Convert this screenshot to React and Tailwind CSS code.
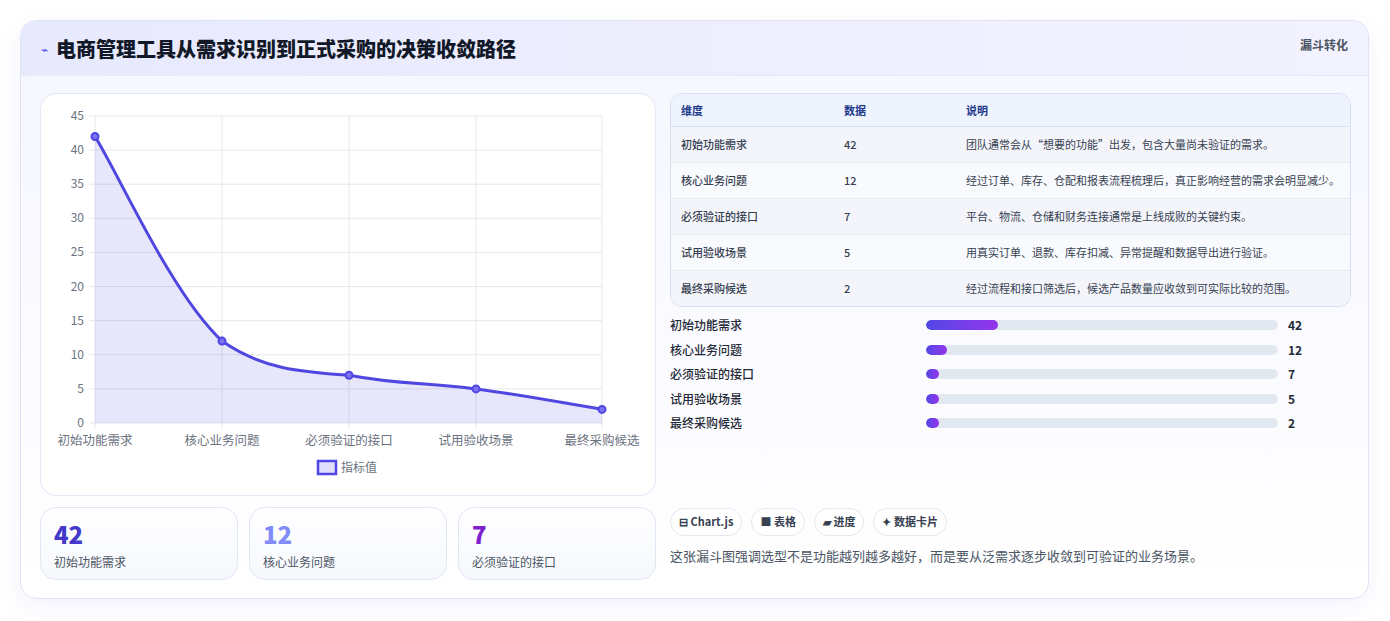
export default function App() {
  const rows = [
    ["初始功能需求", "42", "团队通常会从“想要的功能”出发，包含大量尚未验证的需求。"],
    ["核心业务问题", "12", "经过订单、库存、仓配和报表流程梳理后，真正影响经营的需求会明显减少。"],
    ["必须验证的接口", "7", "平台、物流、仓储和财务连接通常是上线成败的关键约束。"],
    ["试用验收场景", "5", "用真实订单、退款、库存扣减、异常提醒和数据导出进行验证。"],
    ["最终采购候选", "2", "经过流程和接口筛选后，候选产品数量应收敛到可实际比较的范围。"],
  ];
  const pts = [[54, 42.5], [181, 247.1], [308, 281.2], [435, 294.9], [561, 315.4]];
  const line = "M54,42.5 C79.4,83.4 130.2,199.4 181,247.1 C221,275 260,278 308,281.2 C358.8,290.8 384.2,288.1 435,294.9 C485.8,301.7 535.8,311.3 561,315.4";
  const yl = [45, 40, 35, 30, 25, 20, 15, 10, 5, 0];
  const xs = [54, 181, 308, 435, 561];
  const font = { fontFamily: '"Noto Sans CJK SC", "Noto Sans", sans-serif' };
  return (
    <div className="w-[1390px] h-[621px] bg-white pt-5 pl-5" style={font}>
      <div className="w-[1349px] h-[579px] rounded-2xl border border-[#dfe3f3] bg-gradient-to-b from-[#f5f6ff] to-white shadow-[0_8px_24px_rgba(99,102,241,0.08)] overflow-hidden">
        <div className="h-[55px] flex items-start justify-between bg-gradient-to-r from-[#e7e9fd] to-[#f3f2ff] px-5 border-b border-[#e8eaf8]">
          <div className="flex items-center gap-2 pt-[14px]">
            <span className="text-[12px] text-[#4f46e5]">⌁</span>
            <span className="text-[20px] font-extrabold text-[#111827] leading-[28px]">电商管理工具从需求识别到正式采购的决策收敛路径</span>
          </div>
          <span className="text-[12px] font-bold text-[#4b5563] pt-[15px]">漏斗转化</span>
        </div>
        <div className="flex gap-[14px] pl-[19px] pt-[17px]">
          <div className="w-[616px] flex flex-col gap-[11px]">
            <div className="h-[403px] rounded-2xl border border-[#e3e7f3] bg-white">
              <svg width="615" height="401" className="text-[12px]">
                {yl.map((v, i) => {
                  const y = 22 + i * (307 / 9);
                  return (
                    <g key={v}>
                      <line x1="48" x2="561" y1={y} y2={y} stroke="#e5e7eb" />
                      <text x="43" y={y + 4} textAnchor="end" fill="#6b7280" fontSize="12">{v}</text>
                    </g>
                  );
                })}
                {xs.map((x, i) => (
                  <g key={x}>
                    <line x1={x} x2={x} y1="22" y2="335" stroke="#e5e7eb" />
                    <text x={x} y="351" textAnchor="middle" fill="#6b7280" fontSize="12.5">{rows[i][0]}</text>
                  </g>
                ))}
                <path d={line + " L561,329 L54,329 Z"} fill="rgba(99,88,230,0.15)" />
                <path d={line} fill="none" stroke="#5047e0" strokeWidth="3" />
                {pts.map(([x, y]) => (
                  <circle key={x} cx={x} cy={y} r="3.5" fill="#7c72f0" stroke="#4f46e5" strokeWidth="2" />
                ))}
                <rect x="277" y="367" width="18" height="13" fill="#e0defc" stroke="#4f46e5" strokeWidth="2.5" />
                <text x="300" y="378" fill="#6b7280" fontSize="12">指标值</text>
              </svg>
            </div>
            <div className="grid grid-cols-3 gap-[11px]">
              {[["42", "text-[#4338ca]"], ["12", "text-[#818cf8]"], ["7", "text-[#7e22ce]"]].map(([v, c], i) => (
                <div key={v} className="h-[73px] rounded-2xl border border-[#dfe6f3] bg-gradient-to-b from-white to-[#f6f8fd] px-[13px] pt-[9px]">
                  <div className={`text-[24px] font-extrabold leading-[34px] ${c}`}>{v}</div>
                  <div className="text-[12px] text-[#4b5563] mt-[2px]">{rows[i][0]}</div>
                </div>
              ))}
            </div>
          </div>
          <div className="w-[681px] flex flex-col">
            <div className="rounded-xl border border-[#d6def0] overflow-hidden text-[11px]">
              <div className="flex h-[33px] items-center bg-[#eef3fd] border-b border-[#dbe2f0] font-bold text-[#1e3a8a]">
                <div className="w-[173px] pl-[10px]">维度</div>
                <div className="w-[122px]">数据</div>
                <div className="flex-1">说明</div>
              </div>
              {rows.map((r, i) => (
                <div key={r[0]} className={`flex py-[9px] ${i < 4 ? "border-b border-[#e5e9f2]" : ""} ${i % 2 ? "bg-[#f8fafd]" : "bg-[#f3f5fb]"} text-[#374151] leading-[17px]`}>
                  <div className="w-[173px] pl-[10px] font-medium">{r[0]}</div>
                  <div className="w-[122px] font-medium">{r[1]}</div>
                  <div className="flex-1 pr-[10px]">{r[2]}</div>
                </div>
              ))}
            </div>
            <div className="mt-[9px] flex flex-col gap-[6px]">
              {rows.map((r) => (
                <div key={r[0]} className="flex items-center h-[18.5px] text-[12px] font-medium text-[#1f2937]">
                  <div className="w-[256px]">{r[0]}</div>
                  <div className="w-[352px] h-[10px] rounded-full bg-[#e2e8f0] overflow-hidden">
                    <div className="h-full rounded-full bg-gradient-to-r from-[#4f46e5] to-[#9333ea]" style={{ width: `${Math.max(r[1] / 42 * 20.5, 3.8)}%` }} />
                  </div>
                  <div className="ml-[10px] font-bold">{r[1]}</div>
                </div>
              ))}
            </div>
            <div className="mt-[75px] flex gap-[9px] text-[11px] font-bold text-[#374151]">
              {["⊟ Chart.js", "■ 表格", "▰ 进度", "✦ 数据卡片"].map((t) => (
                <span key={t} className="h-[28px] px-[8px] rounded-full border border-[#e2e8f0] bg-white flex items-center">{t}</span>
              ))}
            </div>
            <div className="mt-[10px] text-[13px] text-[#4b5563]">这张漏斗图强调选型不是功能越列越多越好，而是要从泛需求逐步收敛到可验证的业务场景。</div>
          </div>
        </div>
      </div>
    </div>
  );
}
